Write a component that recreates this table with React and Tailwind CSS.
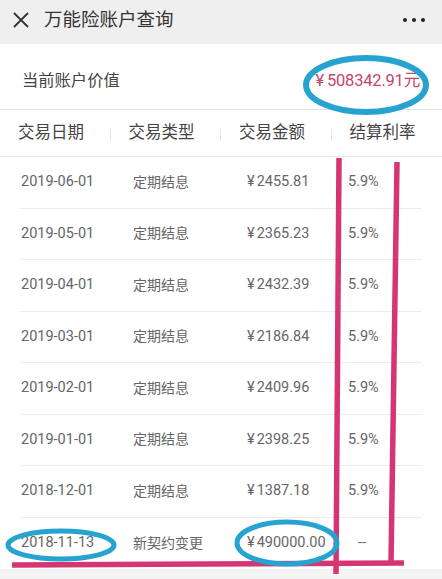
import React from 'react';

const rows = [
  ['2019-06-01', '定期结息', '2455.81', '5.9%'],
  ['2019-05-01', '定期结息', '2365.23', '5.9%'],
  ['2019-04-01', '定期结息', '2432.39', '5.9%'],
  ['2019-03-01', '定期结息', '2186.84', '5.9%'],
  ['2019-02-01', '定期结息', '2409.96', '5.9%'],
  ['2019-01-01', '定期结息', '2398.25', '5.9%'],
  ['2018-12-01', '定期结息', '1387.18', '5.9%'],
  ['2018-11-13', '新契约变更', '490000.00', '--'],
];

const heads = ['交易日期', '交易类型', '交易金额', '结算利率'];

export default function App() {
  return (
    <div
      className="relative w-[442px] h-[579px] overflow-hidden bg-[#f4f4f4]"
      style={{ fontFamily: 'Roboto, "Noto Sans CJK SC", sans-serif' }}
    >
      {/* Nav bar */}
      <div className="h-[44px] flex items-center bg-[#efefef] pl-[13px] pr-[17px] pb-[4px]">
        <svg width="16" height="16" viewBox="0 0 16 16" className="shrink-0">
          <path d="M1 1L15 15M15 1L1 15" stroke="#333" strokeWidth="1.8" fill="none" />
        </svg>
        <div className="ml-[15px] text-[18.5px] text-[#333] leading-none">万能险账户查询</div>
        <div className="ml-auto flex gap-[5px]">
          <span className="w-[4px] h-[4px] rounded-full bg-[#222]" />
          <span className="w-[4px] h-[4px] rounded-full bg-[#222]" />
          <span className="w-[4px] h-[4px] rounded-full bg-[#222]" />
        </div>
      </div>

      {/* Account value */}
      <div className="h-[66px] flex items-center justify-between bg-white border-b border-[#e4e4e4] pl-[22px] pr-[22px] pt-[10px]">
        <span className="text-[16.3px] text-[#444]">当前账户价值</span>
        <span className="text-[16.5px] text-[#c4456c] tracking-[-0.2px]">
          <span className="mr-[3px]">¥</span>508342.91元
        </span>
      </div>

      {/* Table header */}
      <div className="h-[47px] grid grid-cols-4 items-center bg-white border-b border-[#e4e4e4]">
        {heads.map((h, i) => (
          <div key={h} className="relative h-full flex items-center pl-[18px] text-[16.5px] text-[#444]">
            {h}
            {i < 3 && <span className="absolute right-0 top-[18px] h-[12px] w-px bg-[#e6e6e6]" />}
          </div>
        ))}
      </div>

      {/* Rows */}
      <div className="bg-white px-[20px]">
        {rows.map((r) => (
          <div
            key={r[0]}
            className="h-[51.5px] grid grid-cols-[113px_114px_101px_1fr] items-center border-b border-[#ececec] last:border-b-0 text-[14.5px] text-[#666]"
          >
            <span className="pl-px">{r[0]}</span>
            <span className="text-[14px]">{r[1]}</span>
            <span>
              <span className="mr-[2px]">¥</span>
              {r[2]}
            </span>
            <span className={r[3] === '--' ? 'pl-[10px]' : ''}>{r[3]}</span>
          </div>
        ))}
      </div>

      {/* Hand-drawn annotations */}
      <svg className="absolute inset-0 pointer-events-none" width="442" height="579" viewBox="0 0 442 579">
        <g stroke="#d63573" strokeWidth="5.5" fill="none" strokeLinecap="butt">
          <path d="M339 158 L336 574" />
          <path d="M397 162 L391 563" />
          <path d="M12 565 L404 563" />
        </g>
        <g stroke="#27a3cf" fill="none">
          <ellipse cx="366" cy="85" rx="60" ry="27" strokeWidth="6" />
          <ellipse cx="61" cy="545" rx="53" ry="14" strokeWidth="5" />
          <ellipse cx="287" cy="543" rx="50" ry="21" strokeWidth="5" />
        </g>
      </svg>
    </div>
  );
}
